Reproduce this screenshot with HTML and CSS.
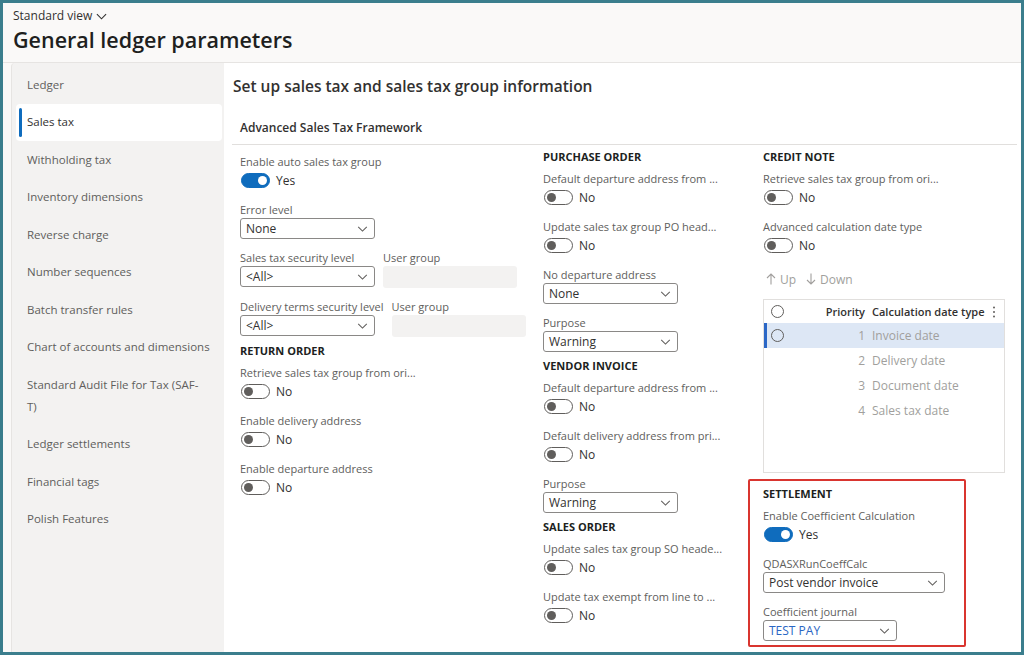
FILE: index.html
```html
<!DOCTYPE html>
<html lang="en">

<head>
    <meta charset="UTF-8">
    <title>General ledger parameters</title>
    <link rel="stylesheet" href="styles.css">
</head>

<body>
    <div class="frame">
        <header class="page-head">
            <div class="view-switch">Standard view
                <svg class="chev-sm" viewBox="0 0 12 7" width="11" height="7">
                    <path d="M1 1l5 5 5-5" fill="none" stroke="#323130" stroke-width="1.2" />
                </svg>
            </div>
            <h1 class="page-title">General ledger parameters</h1>
        </header>

        <div class="page-body">
            <nav class="side-nav">
                <div class="nav-item">Ledger</div>
                <div class="nav-item active">Sales tax</div>
                <div class="nav-item">Withholding tax</div>
                <div class="nav-item">Inventory dimensions</div>
                <div class="nav-item">Reverse charge</div>
                <div class="nav-item">Number sequences</div>
                <div class="nav-item">Batch transfer rules</div>
                <div class="nav-item">Chart of accounts and dimensions</div>
                <div class="nav-item">Standard Audit File for Tax (SAF-<br>T)</div>
                <div class="nav-item">Ledger settlements</div>
                <div class="nav-item">Financial tags</div>
                <div class="nav-item">Polish Features</div>
            </nav>

            <main class="content">
                <h2 class="content-title">Set up sales tax and sales tax group information</h2>
                <div class="group-title">Advanced Sales Tax Framework</div>

                <div class="columns">
                    <!-- left column -->
                    <div class="col col-1">
                        <div class="field">
                            <div class="label">Enable auto sales tax group</div>
                            <div class="toggle-row"><span class="toggle on"></span>Yes</div>
                        </div>
                        <div class="field">
                            <div class="label">Error level</div>
                            <div class="select"><span>None</span>
                                <svg class="chev" viewBox="0 0 12 7" width="11" height="6"><path d="M1 1l5 5 5-5" /></svg>
                            </div>
                        </div>
                        <div class="field-pair">
                            <div class="field">
                                <div class="label">Sales tax security level</div>
                                <div class="select"><span>&lt;All&gt;</span>
                                    <svg class="chev" viewBox="0 0 12 7" width="11" height="6"><path d="M1 1l5 5 5-5" /></svg>
                                </div>
                            </div>
                            <div class="field">
                                <div class="label">User group</div>
                                <div class="input-box"></div>
                            </div>
                        </div>
                        <div class="field-pair">
                            <div class="field">
                                <div class="label">Delivery terms security level</div>
                                <div class="select"><span>&lt;All&gt;</span>
                                    <svg class="chev" viewBox="0 0 12 7" width="11" height="6"><path d="M1 1l5 5 5-5" /></svg>
                                </div>
                            </div>
                            <div class="field">
                                <div class="label">User group</div>
                                <div class="input-box"></div>
                            </div>
                        </div>

                        <div class="section">RETURN ORDER</div>
                        <div class="field">
                            <div class="label">Retrieve sales tax group from ori...</div>
                            <div class="toggle-row"><span class="toggle"></span>No</div>
                        </div>
                        <div class="field">
                            <div class="label">Enable delivery address</div>
                            <div class="toggle-row"><span class="toggle"></span>No</div>
                        </div>
                        <div class="field">
                            <div class="label">Enable departure address</div>
                            <div class="toggle-row"><span class="toggle"></span>No</div>
                        </div>
                    </div>

                    <!-- middle column -->
                    <div class="col col-2">
                        <div class="section">PURCHASE ORDER</div>
                        <div class="field">
                            <div class="label">Default departure address from ...</div>
                            <div class="toggle-row"><span class="toggle"></span>No</div>
                        </div>
                        <div class="field">
                            <div class="label">Update sales tax group PO head...</div>
                            <div class="toggle-row"><span class="toggle"></span>No</div>
                        </div>
                        <div class="field">
                            <div class="label">No departure address</div>
                            <div class="select"><span>None</span>
                                <svg class="chev" viewBox="0 0 12 7" width="11" height="6"><path d="M1 1l5 5 5-5" /></svg>
                            </div>
                        </div>
                        <div class="field">
                            <div class="label">Purpose</div>
                            <div class="select"><span>Warning</span>
                                <svg class="chev" viewBox="0 0 12 7" width="11" height="6"><path d="M1 1l5 5 5-5" /></svg>
                            </div>
                        </div>

                        <div class="section">VENDOR INVOICE</div>
                        <div class="field">
                            <div class="label">Default departure address from ...</div>
                            <div class="toggle-row"><span class="toggle"></span>No</div>
                        </div>
                        <div class="field">
                            <div class="label">Default delivery address from pri...</div>
                            <div class="toggle-row"><span class="toggle"></span>No</div>
                        </div>
                        <div class="field">
                            <div class="label">Purpose</div>
                            <div class="select"><span>Warning</span>
                                <svg class="chev" viewBox="0 0 12 7" width="11" height="6"><path d="M1 1l5 5 5-5" /></svg>
                            </div>
                        </div>

                        <div class="section">SALES ORDER</div>
                        <div class="field">
                            <div class="label">Update sales tax group SO heade...</div>
                            <div class="toggle-row"><span class="toggle"></span>No</div>
                        </div>
                        <div class="field">
                            <div class="label">Update tax exempt from line to ...</div>
                            <div class="toggle-row"><span class="toggle"></span>No</div>
                        </div>
                    </div>

                    <!-- right column -->
                    <div class="col col-3">
                        <div class="section">CREDIT NOTE</div>
                        <div class="field">
                            <div class="label">Retrieve sales tax group from ori...</div>
                            <div class="toggle-row"><span class="toggle"></span>No</div>
                        </div>
                        <div class="field">
                            <div class="label">Advanced calculation date type</div>
                            <div class="toggle-row"><span class="toggle"></span>No</div>
                        </div>

                        <div class="grid-tools">
                            <span class="tool">
                                <svg viewBox="0 0 10 12" width="10" height="12"><path d="M5 11.5V1M1 5l4-4 4 4" /></svg>Up
                            </span>
                            <span class="tool">
                                <svg viewBox="0 0 10 12" width="10" height="12"><path d="M5 0.5V11M1 7l4 4 4-4" /></svg>Down
                            </span>
                        </div>

                        <div class="grid">
                            <div class="grid-row grid-head">
                                <span class="cell-check"><span class="radio"></span></span>
                                <span class="cell-prio">Priority</span>
                                <span class="cell-type">Calculation date type</span>
                                <span class="cell-more">
                                    <svg viewBox="0 0 4 12" width="4" height="12">
                                        <circle cx="2" cy="1.5" r="1" /><circle cx="2" cy="6" r="1" /><circle cx="2" cy="10.5" r="1" />
                                    </svg>
                                </span>
                            </div>
                            <div class="grid-row selected">
                                <span class="cell-check"><span class="radio"></span></span>
                                <span class="cell-prio">1</span>
                                <span class="cell-type">Invoice date</span>
                            </div>
                            <div class="grid-row">
                                <span class="cell-check"></span>
                                <span class="cell-prio">2</span>
                                <span class="cell-type">Delivery date</span>
                            </div>
                            <div class="grid-row">
                                <span class="cell-check"></span>
                                <span class="cell-prio">3</span>
                                <span class="cell-type">Document date</span>
                            </div>
                            <div class="grid-row">
                                <span class="cell-check"></span>
                                <span class="cell-prio">4</span>
                                <span class="cell-type">Sales tax date</span>
                            </div>
                        </div>

                        <div class="settle">
                            <div class="section">SETTLEMENT</div>
                            <div class="field">
                                <div class="label">Enable Coefficient Calculation</div>
                                <div class="toggle-row"><span class="toggle on"></span>Yes</div>
                            </div>
                            <div class="field">
                                <div class="label">QDASXRunCoeffCalc</div>
                                <div class="select wide"><span>Post vendor invoice</span>
                                    <svg class="chev" viewBox="0 0 12 7" width="11" height="6"><path d="M1 1l5 5 5-5" /></svg>
                                </div>
                            </div>
                            <div class="field">
                                <div class="label">Coefficient journal</div>
                                <div class="select link"><span>TEST PAY</span>
                                    <svg class="chev" viewBox="0 0 12 7" width="11" height="6"><path d="M1 1l5 5 5-5" /></svg>
                                </div>
                            </div>
                        </div>
                    </div>
                </div>
            </main>
        </div>
    </div>
</body>

</html>
```

FILE: styles.css
```css
* {
    box-sizing: border-box;
}

body {
    margin: 0;
    font-family: "Open Sans", "Noto Sans", sans-serif;
    color: #323130;
}

.frame {
    width: 1024px;
    height: 655px;
    border: 3px solid #3b7e8d;
    background-color: #faf9f8;
    display: flex;
    flex-direction: column;
    overflow: hidden;
}

/* header */
.page-head {
    height: 60px;
    padding: 5px 10px 0;
    border-bottom: 1px solid #e6e4e2;
}

.view-switch {
    display: flex;
    align-items: center;
    gap: 4px;
    font-size: 12px;
    line-height: 16px;
    color: #323130;
}

.page-title {
    margin: 3px 0 0;
    font-size: 21.5px;
    font-weight: 600;
    line-height: 26px;
    color: #201f1e;
}

.page-body {
    flex: 1;
    display: flex;
    padding-left: 8px;
}

/* left nav */
.side-nav {
    width: 213px;
    background-color: #f3f2f1;
    padding: 3px 2px 0 4px;
    border-left: 1px solid #e6e4e2;
    border-radius: 4px 0 0 0;
}

.nav-item {
    position: relative;
    padding: 7.75px 4px 7.75px 11px;
    font-size: 11.5px;
    line-height: 22px;
    color: #605e5c;
    border-radius: 4px;
    white-space: nowrap;
}

.nav-item.active {
    background-color: #fff;
    color: #323130;
}

.nav-item.active::before {
    content: "";
    position: absolute;
    left: 3px;
    top: 4px;
    bottom: 4px;
    width: 3px;
    border-radius: 2px;
    background-color: #0f6cbd;
}

/* main */
.content {
    flex: 1;
    background-color: #fff;
    padding: 13px 4px 0 8px;
}

.content-title {
    margin: 0 0 22px 1px;
    font-size: 15.5px;
    font-weight: 600;
    line-height: 20px;
    color: #323130;
}

.group-title {
    padding: 0 0 6px 8px;
    font-size: 12px;
    font-weight: 600;
    line-height: 20px;
    border-bottom: 1px solid #e1dfdd;
}

.columns {
    display: flex;
    padding: 9px 0 0 8px;
}

.col-1 {
    width: 303px;
}

.col-2 {
    width: 220px;
}

.col-3 {
    width: 242px;
}

.field {
    margin-bottom: 11px;
}

.label {
    font-size: 11px;
    line-height: 16px;
    color: #605e5c;
    white-space: nowrap;
}

.section {
    margin: -5px 0 6px;
    font-size: 11px;
    font-weight: 700;
    line-height: 16px;
    color: #201f1e;
}

.field-pair {
    display: flex;
    gap: 8px;
    margin-bottom: 11px;
}

.field-pair .field {
    margin-bottom: 0;
    min-width: 135px;
}

.input-box {
    width: 134px;
    height: 22px;
    background-color: #f3f2f1;
    border-radius: 3px;
}

/* toggles */
.toggle-row {
    display: flex;
    align-items: center;
    gap: 6px;
    height: 21px;
    padding-left: 1px;
    font-size: 12px;
    color: #323130;
}

.toggle {
    position: relative;
    width: 29px;
    height: 15px;
    border: 1px solid #605e5c;
    border-radius: 8px;
}

.toggle::after {
    content: "";
    position: absolute;
    left: 2px;
    top: 2px;
    width: 9px;
    height: 9px;
    border-radius: 50%;
    background-color: #605e5c;
}

.toggle.on {
    background-color: #0f6cbd;
    border-color: #0f6cbd;
}

.toggle.on::after {
    left: auto;
    right: 2px;
    background-color: #fff;
}

/* dropdowns */
.select {
    display: flex;
    align-items: center;
    justify-content: space-between;
    width: 135px;
    height: 21px;
    padding: 0 6px 0 5px;
    border: 1px solid #8a8886;
    border-radius: 3px;
    font-size: 12px;
    color: #323130;
}

.select.wide {
    width: 182px;
}

.select.link {
    width: 134px;
    color: #2a66c4;
}

.chev path {
    fill: none;
    stroke: #605e5c;
    stroke-width: 1.2;
}

/* grid */
.grid-tools {
    display: flex;
    align-items: center;
    gap: 10px;
    height: 24px;
    padding-left: 3px;
    font-size: 12px;
    color: #a19f9d;
}

.tool {
    display: flex;
    align-items: center;
    gap: 4px;
}

.tool path {
    fill: none;
    stroke: #a19f9d;
    stroke-width: 1.1;
}

.grid {
    margin-top: 8px;
    height: 174px;
    border: 1px solid #e1dfdd;
}

.grid-row {
    display: grid;
    grid-template-columns: 27px 74px minmax(0, 1fr) 20px;
    align-items: center;
    height: 25px;
    font-size: 12px;
    color: #a19f9d;
}

.grid-head {
    height: 23px;
    font-size: 11px;
    font-weight: 600;
    color: #323130;
}

.grid-row.selected {
    background-color: #dde7f5;
    box-shadow: inset 3px 0 0 #2b67c6;
}

.radio {
    display: block;
    width: 13px;
    height: 13px;
    margin-left: 7px;
    border: 1px solid #605e5c;
    border-radius: 50%;
}

.cell-prio {
    text-align: right;
}

.cell-type {
    padding-left: 7px;
    white-space: nowrap;
}

.cell-more {
    display: flex;
    justify-content: center;
}

.cell-more circle {
    fill: #605e5c;
}

/* settlement */
.settle {
    width: 218px;
    margin: 6px 0 0 -15px;
    padding: 10px 0 4px 13px;
    border: 2px solid #d9352f;
    border-radius: 2px;
}

.settle .field:last-child {
    margin-bottom: 0;
}
```
